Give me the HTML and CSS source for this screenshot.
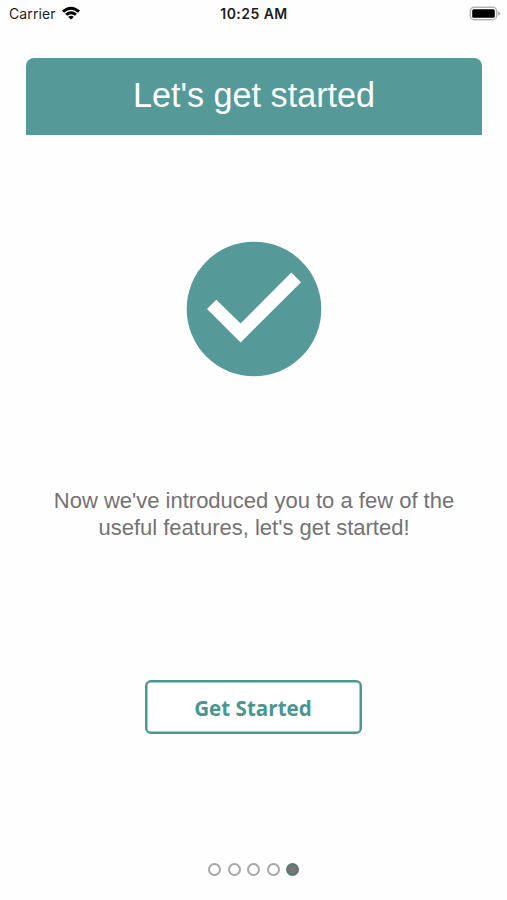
FILE: index.html
```html
<!DOCTYPE html>
<html lang="en">
<head>
<meta charset="utf-8">
<title>Let's get started</title>
<link rel="stylesheet" href="styles.css">
</head>
<body>
<div class="screen">
  <header class="status">
    <div class="status-left"><span class="carrier">Carrier</span>
      <svg class="wifi" viewBox="0 0 20 14" width="20" height="14"><path d="M1 4.6Q10-3.2 19 4.6L17 6.7Q10 .8 3 6.7Z"/><path d="M4.1 7.8Q10 2.9 15.9 7.8L13.9 9.8Q10 6.7 6.1 9.8Z"/><path d="M7.2 10.9Q10 8.7 12.8 10.9L10 13.6Z"/></svg>
    </div>
    <span class="time">10:25 AM</span>
    <div class="status-right">
      <svg viewBox="0 0 32 16" width="32" height="16"><rect x="1.3" y="1.3" width="26.4" height="12.4" rx="4" fill="#fff" stroke="#b4b4b4" stroke-width="1.5"/><rect x="3.2" y="3.2" width="22.6" height="8.6" rx="1.5" fill="#000"/><path d="M29 5.2Q31.2 6 31.2 7.5T29 9.8Z" fill="#b4b4b4"/></svg>
    </div>
  </header>
  <main class="card">
    <h1 class="title">Let's get started</h1>
    <svg class="check" viewBox="0 0 136 136" width="136" height="136"><circle cx="68" cy="68" r="67.3" fill="#559a98"/><path d="M21 68 30.3 58.7 54.6 82.6 105.4 31.5 115 41.2 54.6 101.4Z" fill="#fff"/></svg>
    <p class="copy">Now we've introduced you to a few of the<br>useful features, let's get started!</p>
    <button class="start">Get Started</button>
    <nav class="dots"><i></i><i></i><i></i><i></i><i class="active"></i></nav>
  </main>
</div>
</body>
</html>
```
FILE: styles.css
```css
* { box-sizing: border-box; }
body { margin: 0; background: #fefefe; font-family: "Liberation Sans", Arial, sans-serif; }
.screen { height: 900px; overflow: hidden; }
.status { height: 28px; padding: 0 6px 0 9px; display: grid; grid-template-columns: 1fr auto 1fr; align-items: center; font: 14px/28px Inter, sans-serif; color: #1c1c1c; }
.status-left { display: flex; align-items: center; gap: 5px; }
.carrier { letter-spacing: .1px; }
.wifi { fill: #000; margin-top: -2px; }
.time { font-weight: 600; font-size: 14px; letter-spacing: .45px; margin-right: 2px; }
.status-right { display: flex; justify-content: flex-end; }
.card { margin: 30px 25px 0 26px; display: flex; flex-direction: column; align-items: center; }
.title { width: 100%; height: 77px; margin: 0; border-radius: 8px 8px 0 0; background: #559a98; color: #fbffff; text-align: center; font-size: 34.2px; line-height: 74px; font-weight: 400; }
.check { margin-top: 106px; }
.copy { margin: 110px 0 0; color: #737373; font-size: 22px; line-height: 27px; text-align: center; white-space: nowrap; }
.start { width: 217px; height: 54px; margin: 139px 2px 0 0; padding: 2px 0 0; border: 2px solid #499791; border-radius: 6px; box-shadow: inset 0 0 0 .5px #499791; background: #fff; color: #499791; font: 700 20.6px/48px "Open Sans", sans-serif; }
.dots { display: flex; gap: 6.5px; margin: 128px 1px 0 0; padding-top: 1px; }
.dots i { width: 13px; height: 13px; border: 2px solid #a6a6a6; border-radius: 50%; }
.dots .active { background: #777; border-color: #577a73; }
```
